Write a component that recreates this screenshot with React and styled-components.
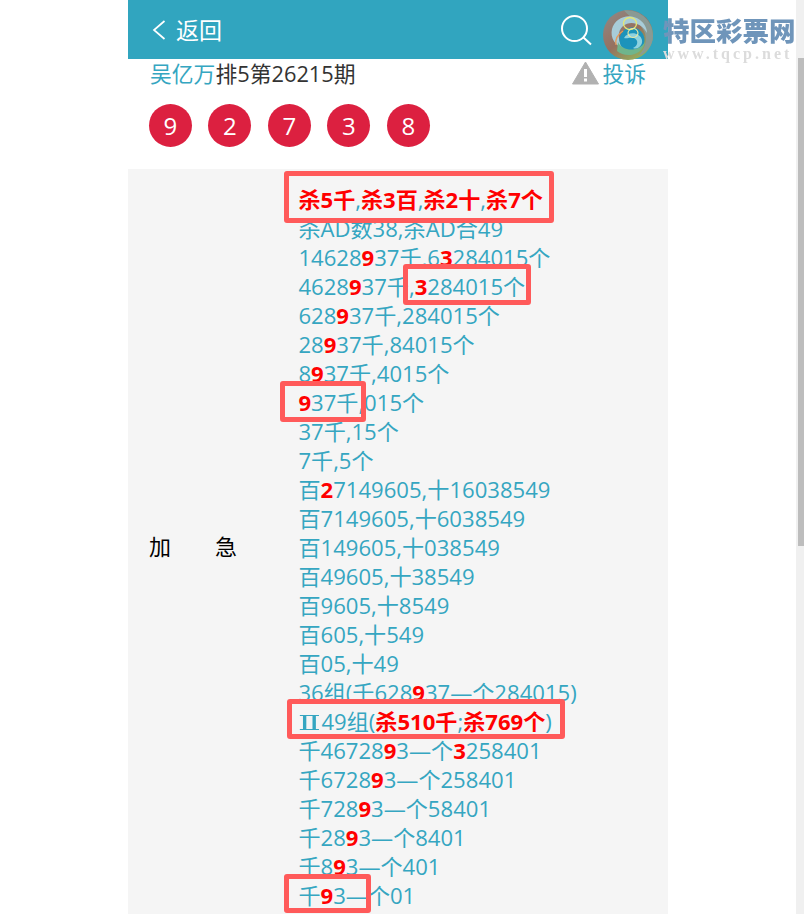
import React from 'react';
//Styling
import styled, { createGlobalStyle } from "styled-components"

const FONT = `"Open Sans", "Noto Sans CJK SC", sans-serif`
const TEAL = '#35a6c1'

const balls = [9, 2, 7, 3, 8]

//red boxes drawn over the screenshot
const marks = [
    { x: 284, y: 171, w: 270, h: 52 },
    { x: 403, y: 264, w: 128, h: 41 },
    { x: 280, y: 381, w: 86, h: 41 },
    { x: 287, y: 699, w: 278, h: 40 },
    { x: 284, y: 874, w: 87, h: 39 },
]

const App = () => {
    return (
        <>
            <GlobalStyle />
            <Page>
                <Main>
                    <Column>
                        <Header>
                            <Back>
                                <svg width="14" height="20" viewBox="0 0 14 20" fill="none" stroke="#fff" strokeWidth="1.7">
                                    <path d="M12.5 1 L2 10 L12.5 19" />
                                </svg>
                                <span>返回</span>
                            </Back>
                            <svg width="32" height="32" viewBox="0 0 32 32" fill="none" stroke="#fff" strokeWidth="2">
                                <circle cx="14.5" cy="14.5" r="12.5" />
                                <path d="M23.5 23.5 L31 30.5" />
                            </svg>
                        </Header>
                        <TitleRow>
                            <div><Author>吴亿万</Author>排5第26215期</div>
                            <Report>
                                <svg width="27" height="24" viewBox="0 0 27 24">
                                    <path d="M13.5 1 L26.5 23 L0.5 23 Z" fill="#b1b1b1" stroke="#b1b1b1" strokeLinejoin="round" />
                                    <rect x="12" y="8" width="3" height="8" fill="#fff" />
                                    <rect x="12" y="17.5" width="3" height="3" fill="#fff" />
                                </svg>
                                <span>投诉</span>
                            </Report>
                        </TitleRow>
                        <Balls>
                            {balls.map((n, i) => <Ball key={i}>{n}</Ball>)}
                        </Balls>
                        <Row>
                            <Label><span>加</span><span>急</span></Label>
                            <Lines>
                                <div><R>杀5千</R>,<R>杀3百</R>,<R>杀2十</R>,<R>杀7个</R></div>
                                <div>杀AD数38,杀AD合49</div>
                                <div>14628<R>9</R>37千,6<R>3</R>284015个</div>
                                <div>4628<R>9</R>37千,<R>3</R>284015个</div>
                                <div>628<R>9</R>37千,284015个</div>
                                <div>28<R>9</R>37千,84015个</div>
                                <div>8<R>9</R>37千,4015个</div>
                                <div><R>9</R>37千,015个</div>
                                <div>37千,15个</div>
                                <div>7千,5个</div>
                                <div>百<R>2</R>7149605,十16038549</div>
                                <div>百7149605,十6038549</div>
                                <div>百149605,十038549</div>
                                <div>百49605,十38549</div>
                                <div>百9605,十8549</div>
                                <div>百605,十549</div>
                                <div>百05,十49</div>
                                <div>36组(千628<R>9</R>37—个284015)</div>
                                <FixedLine><Roman>Ⅱ</Roman>49组(<R>杀510千</R>;<R>杀769个</R>)</FixedLine>
                                <div>千46728<R>9</R>3—个<R>3</R>258401</div>
                                <div>千6728<R>9</R>3—个258401</div>
                                <div>千728<R>9</R>3—个58401</div>
                                <div>千28<R>9</R>3—个8401</div>
                                <div>千8<R>9</R>3—个401</div>
                                <div>千<R>9</R>3—个01</div>
                            </Lines>
                        </Row>
                    </Column>
                </Main>
                <Scrollbar>
                    <Thumb />
                </Scrollbar>

                <Logo>
                    <LogoMark width="52" height="52" viewBox="0 0 52 52">
                        <defs>
                            <linearGradient id="rim" x1="0" y1="0" x2="0.8" y2="1">
                                <stop offset="0" stopColor="#8f8a88" />
                                <stop offset="0.55" stopColor="#96705f" />
                                <stop offset="1" stopColor="#93b85a" />
                            </linearGradient>
                        </defs>
                        <circle cx="26" cy="26" r="25" fill="url(#rim)" />
                        <path d="M22 1.5 C38 0 51 12 51 27 C51 36 45 44 36 47 C43 40 46 31 42 22 C37 12 27 8 22 1.5 Z" fill="#8a9a94" />
                        <path d="M10 20 C13 9 27 3 38 11 C42 14 45 19 45 24 C40 14 28 11 21 17 C15 22 15 33 23 40 C13 37 8 29 10 20 Z" fill="#a8ccd8" />
                        <circle cx="30" cy="31" r="12.5" fill="#1c93bb" />
                        <path d="M16 33 C20 42 36 44 43 33 C41 46 24 50 15 42 Z" fill="#6fb58c" />
                        <path d="M22 29 C26 22 38 23 40 31 C41 37 35 41 31 39 C36 37 37 31 32 29 C28 28 25 30 22 29 Z" fill="#8fd2df" />
                        <ellipse cx="28" cy="14.5" rx="6.5" ry="6" fill="none" stroke="#e4e777" strokeWidth="1.3" />
                        <ellipse cx="31" cy="24" rx="5" ry="4.5" fill="none" stroke="#efe9a0" strokeWidth="1.1" />
                        <path d="M14 36 C13 30 16 25 21 22" fill="none" stroke="#e79a55" strokeWidth="1.3" />
                    </LogoMark>
                    <Brand>
                        <BrandName>特区彩票网</BrandName>
                        <BrandUrl>www.tqcp.net</BrandUrl>
                    </Brand>
                </Logo>

                {marks.map((m, i) => (
                    <Mark key={i} style={{ left: m.x, top: m.y, width: m.w, height: m.h }} />
                ))}
            </Page>
        </>
    )
}

const GlobalStyle = createGlobalStyle`
    html, body{
        margin: 0;
        padding: 0;
        background: white;
        overflow: hidden;
    }
`

const Page = styled.div`
    position: relative;
    display: flex;
    height: 914px;
    overflow: hidden;
    font-family: ${FONT};
`

const Main = styled.div`
    flex: 1;
    display: flex;
    justify-content: center;
`

const Column = styled.div`
    width: 540px;
`

const Header = styled.div`
    height: 59px;
    background: #31a5bf;
    display: flex;
    align-items: center;
    justify-content: space-between;
    padding: 0 76px 0 24px;
    box-sizing: border-box;
    color: white;
`

const Back = styled.div`
    display: flex;
    align-items: center;
    gap: 10px;
    font-size: 23px;
    line-height: 30px;
`

const TitleRow = styled.div`
    display: flex;
    justify-content: space-between;
    align-items: center;
    height: 31px;
    padding: 0 22px 4px;
    box-sizing: border-box;
    font-size: 21.8px;
    color: #333;
`

const Author = styled.span`
    color: ${TEAL};
`

const Report = styled.div`
    display: flex;
    align-items: center;
    gap: 3px;
    color: ${TEAL};
`

const Balls = styled.div`
    display: flex;
    gap: 16.5px;
    padding: 14px 20.8px 22px;
`

const Ball = styled.div`
    width: 43px;
    height: 43px;
    border-radius: 50%;
    background: #dc2040;
    color: white;
    font-size: 24px;
    padding-bottom: 1px;
    box-sizing: border-box;
    display: flex;
    align-items: center;
    justify-content: center;
`

const Row = styled.div`
    display: flex;
    align-items: center;
    background: #f5f5f5;
    padding: 15.5px 0 16.5px;
`

const Label = styled.div`
    width: 171px;
    padding: 0 0 4px 21px;
    box-sizing: border-box;
    font-size: 22px;
    color: black;
    display: flex;
    gap: 44px;
`

const Lines = styled.div`
    font-size: 22.1px;
    line-height: 29px;
    color: ${TEAL};
    white-space: nowrap;
    margin-left: -0.6px;
`

const FixedLine = styled.div`
    height: 29px;
`

const R = styled.b`
    color: red;
    font-weight: 700;
`

const Roman = styled.span`
    font-family: "DejaVu Serif", serif;
    font-size: 21px;
    line-height: 20px;
    display: inline-block;
    width: 23px;
    text-align: center;
    transform: scaleX(1.6);
`

const Scrollbar = styled.div`
    width: 8px;
    flex-shrink: 0;
    background: #f0f0f0;
    padding: 58px 0 0 2px;
    box-sizing: border-box;
`

const Thumb = styled.div`
    height: 488px;
    background: #bdbdbd;
`

const Logo = styled.div`
    position: absolute;
    left: 602px;
    top: 9px;
    display: flex;
    gap: 8px;
`

const LogoMark = styled.svg`
    filter: blur(0.4px);
`

const Brand = styled.div`
    display: flex;
    flex-direction: column;
    padding-top: 5px;
    margin-left: 1px;
    filter: blur(0.4px);
`

const BrandName = styled.div`
    font-family: "Noto Sans CJK SC", sans-serif;
    font-weight: 900;
    font-size: 26.5px;
    line-height: 31px;
    color: #6f95ba;
`

const BrandUrl = styled.div`
    font-family: "Liberation Serif", serif;
    font-weight: 700;
    font-size: 16px;
    line-height: 16px;
    margin-top: 1px;
    letter-spacing: 3px;
    color: #dcdcdc;
`

const Mark = styled.div`
    position: absolute;
    box-sizing: border-box;
    border: 5px solid #ff5a5a;
    border-radius: 3px;
`

export default App
